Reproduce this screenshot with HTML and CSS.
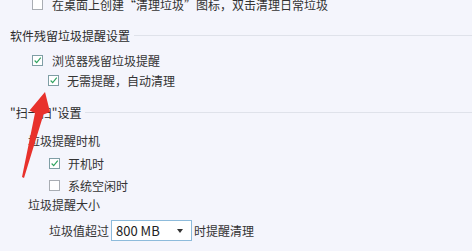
FILE: index.html
```html
<!DOCTYPE html>
<html lang="zh-CN">
    <head>
        <title>垃圾清理设置</title>
        <meta charset="utf-8">
        <link rel="stylesheet" href="styles.css">
    </head>

    <body>
        <div class="painel">
            <div class="linha topo">
                <span class="caixa"></span>
                <span>在桌面上创建“清理垃圾”图标，双击清理日常垃圾</span>
            </div>

            <div class="secao s1">软件残留垃圾提醒设置</div>

            <div class="linha l-nivel1">
                <span class="caixa marcada"><svg viewBox="0 0 11 11"><path d="M2 5.5 L4.5 8 L9.5 2"/></svg></span>
                <span>浏览器残留垃圾提醒</span>
            </div>
            <div class="linha l-nivel2">
                <span class="caixa marcada"><svg viewBox="0 0 11 11"><path d="M2 5.5 L4.5 8 L9.5 2"/></svg></span>
                <span>无需提醒，自动清理</span>
            </div>

            <div class="secao s2">"扫一扫"设置</div>

            <div class="sub t1">垃圾提醒时机</div>
            <div class="linha l-nivel3 c1">
                <span class="caixa marcada"><svg viewBox="0 0 11 11"><path d="M2 5.5 L4.5 8 L9.5 2"/></svg></span>
                <span>开机时</span>
            </div>
            <div class="linha l-nivel3 c2">
                <span class="caixa"></span>
                <span>系统空闲时</span>
            </div>

            <div class="sub t2">垃圾提醒大小</div>
            <div class="linha-valor">
                <span>垃圾值超过</span>
                <div class="seletor">
                    <span>800 MB</span>
                    <span class="seta"></span>
                </div>
                <span>时提醒清理</span>
            </div>

            <svg class="flecha" width="472" height="251" viewBox="0 0 472 251">
                <polygon points="45,92 50,112 43.5,114.5 24,178 22,177 35,113 29.5,110.5" fill="#e8312c"/>
            </svg>
        </div>
    </body>
</html>
```

FILE: styles.css
```css
* {
    font-family: "Noto Sans CJK SC", sans-serif;
    box-sizing: border-box;
}
body {
    margin: 0px;
    padding: 0px;
    background: #f4f5fc;
    color: #333;
    font-size: 12px;
    overflow: hidden;
}
.painel {
    position: relative;
    width: 472px;
    height: 251px;
    overflow: hidden;
}
.linha {
    display: flex;
    align-items: center;
    height: 20px;
    gap: 9px;
}
.topo {
    margin-top: -6px;
    padding-left: 32px;
}
.l-nivel1 {
    margin-top: 5px;
    padding-left: 32px;
}
.l-nivel2 {
    padding-left: 48px;
    gap: 8px;
}
.l-nivel3 {
    padding-left: 49px;
    gap: 8px;
}
.c1 {
    margin-top: 2px;
}
.c2 {
    margin-top: 2px;
}
.caixa {
    width: 11px;
    height: 11px;
    border: solid 1px #a9adb3;
    background: #fff;
    display: flex;
}
.caixa.marcada {
    border-color: #7f9ea5;
}
.caixa svg {
    width: 9px;
    height: 9px;
}
.caixa path {
    fill: none;
    stroke: #2ea35e;
    stroke-width: 1.4;
}
.secao {
    display: flex;
    align-items: center;
    height: 20px;
    padding-left: 10px;
    color: #2a2a2a;
}
.secao::after {
    content: "";
    flex: 1;
    height: 1px;
    background: #dfe2ea;
    margin-left: 4px;
}
.s1 {
    margin-top: 11px;
}
.s2 {
    margin-top: 12px;
}
.sub {
    height: 20px;
    line-height: 20px;
    padding-left: 28px;
}
.t1 {
    margin-top: 9px;
}
.linha-valor {
    display: flex;
    align-items: center;
    margin-top: 5px;
    padding-left: 49px;
    gap: 2px;
}
.seletor {
    width: 81px;
    height: 21px;
    border: solid 1px #8dbbdb;
    background: #fff;
    display: flex;
    align-items: center;
    justify-content: space-between;
    padding: 0px 8px 0px 4px;
    font-size: 13px;
    color: #222;
}
.seta {
    width: 0px;
    height: 0px;
    border-left: solid 3.5px transparent;
    border-right: solid 3.5px transparent;
    border-top: solid 4px #333;
}
.flecha {
    position: absolute;
    left: 0px;
    top: 0px;
}
```
